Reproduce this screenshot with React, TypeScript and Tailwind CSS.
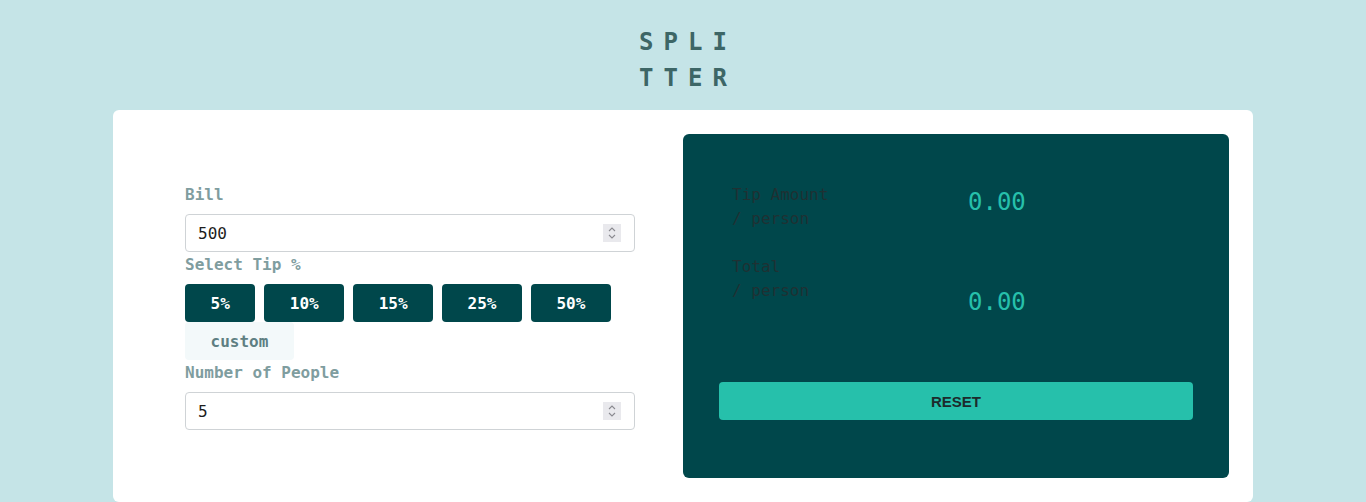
import React from "react";

const mono = { fontFamily: '"DejaVu Sans Mono", "Liberation Mono", monospace' };

function Spinner() {
  return (
    <div className="absolute right-[13px] top-[9px] flex h-[18px] w-[18px] items-center justify-center bg-[#e9e9ed]">
      <svg width="10" height="14" viewBox="0 0 10 14" fill="none" stroke="#8a8a90" strokeWidth="1.1">
        <path d="M2 5 L5 2 L8 5" />
        <path d="M2 9 L5 12 L8 9" />
      </svg>
    </div>
  );
}

function Field({ value }: { value: string }) {
  return (
    <div className="relative h-[38px] w-[450px] rounded-[4px] border border-[#cfd3d6] bg-white">
      <input
        readOnly
        value={value}
        className="h-full w-full rounded-[4px] bg-transparent pl-[12px] pt-[1px] text-[16px] text-[#1d1d1d] outline-none"
        style={mono}
      />
      <Spinner />
    </div>
  );
}

export default function App() {
  const tips = ["5%", "10%", "15%", "25%", "50%"];
  return (
    <div className="min-h-[502px] w-full bg-[#c5e4e7]" style={mono}>
      <div className="flex flex-col items-center pt-[24px] pb-[14px] text-[24px] font-bold leading-[36px] text-[#3d6666]">
        <div className="pl-[10px] tracking-[10px]">SPLI</div>
        <div className="pl-[10px] tracking-[10px]">TTER</div>
      </div>
      <div className="mx-auto flex w-[1140px] rounded-t-[6px] rounded-b-[6px] bg-white pt-6 pb-6 pl-[72px] pr-6">
        <div className="flex w-[450px] flex-col justify-center">
          <div className="mb-[6px] text-[16px] font-bold leading-[26px] text-[#7f9d9f]">Bill</div>
          <Field value="500" />
          <div className="mb-[6px] text-[16px] font-bold leading-[26px] text-[#7f9d9f]">Select Tip %</div>
          <div className="flex flex-wrap gap-x-[9px]">
            {tips.map((t) => (
              <button
                key={t}
                className="h-[38px] rounded-[4px] bg-[#00474b] px-[25.5px] pt-[1px] text-[16px] font-bold text-white"
                style={mono}
              >
                {t}
              </button>
            ))}
            <button
              className="h-[38px] rounded-[4px] bg-[#f3f9fa] px-[25.5px] pt-[1px] text-[16px] font-bold text-[#5e7f82]"
              style={mono}
            >
              custom
            </button>
          </div>
          <div className="mb-[6px] text-[16px] font-bold leading-[26px] text-[#7f9d9f]">Number of People</div>
          <Field value="5" />
        </div>
        <div className="ml-[48px] h-[344px] w-[546px] rounded-[6px] bg-[#00474b] px-9 pt-[49px]">
          <div className="grid grid-cols-2">
            <div className="px-[13px] text-[16px] leading-[24px] text-[#1f3133]">
              <div>Tip Amount</div>
              <div>/ person</div>
            </div>
            <div className="mt-[3px] px-3 text-[24px] leading-[32px] text-[#26c0ab]">0.00</div>
          </div>
          <div className="mt-6 grid grid-cols-2">
            <div className="px-[13px] text-[16px] leading-[24px] text-[#1f3133]">
              <div>Total</div>
              <div>/ person</div>
            </div>
            <div className="mt-[31px] px-3 text-[24px] leading-[32px] text-[#26c0ab]">0.00</div>
          </div>
          <button
            className="mt-[64px] h-[38px] w-full rounded-[4px] bg-[#26c0ab] pt-[2px] text-[15px] font-bold text-[#1c2b2c]"
            style={{ fontFamily: '"Liberation Sans", Arial, sans-serif' }}
          >
            RESET
          </button>
        </div>
      </div>
    </div>
  );
}
